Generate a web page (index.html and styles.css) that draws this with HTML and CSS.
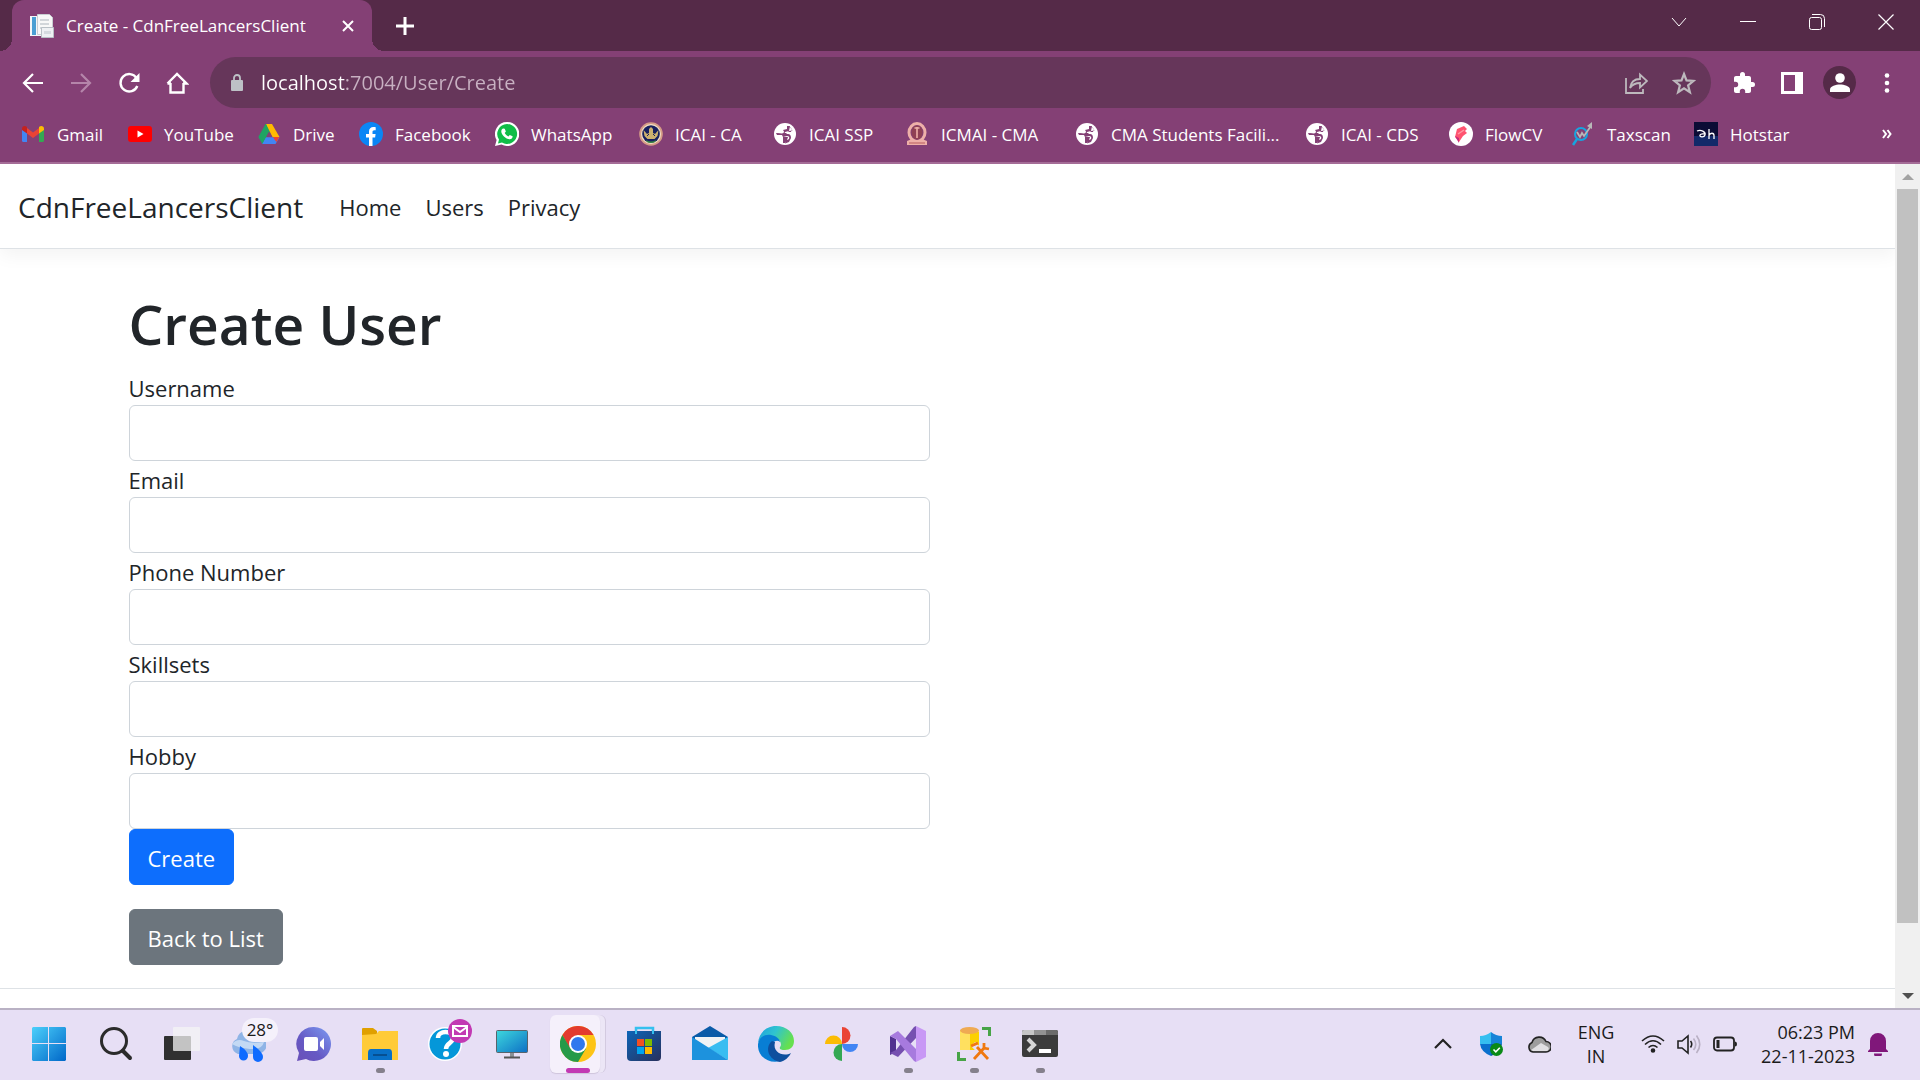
FILE: index.html
```html
<!DOCTYPE html>
<html lang="en">
<head>
<meta charset="utf-8">
<title>Create - CdnFreeLancersClient</title>
<link rel="stylesheet" href="styles.css">
</head>
<body>
<header class="browser">
  <div class="tabstrip">
    <div class="tab">
      <svg class="i24" viewBox="0 0 24 24"><path fill="#f4f6f8" d="M0 2h14v20H0z"/><path fill="#4b9fd3" d="M2 3h4v18H2z"/><path fill="#f8f8f8" stroke="#c9ced2" d="M7.500.500h12l3 3v17h-15z"/><path stroke="#d2d6da" stroke-width="2" d="M10 6h9M10 10h9M10 14h4"/><path fill="#eef0f3" stroke="#b9c0c6" d="M11.500 13.500h12v10h-12z"/><path fill="#d5dadf" d="M14 17h7v3h-7z"/></svg>
      <span class="tab-title">Create - CdnFreeLancersClient</span>
      <button class="bare" aria-label="Close tab"><svg width="12" height="12" viewBox="0 0 12 12"><path stroke="#fff" stroke-width="2" d="M1 1l10 10M11 1L1 11"/></svg></button>
    </div>
    <button class="bare newtab" aria-label="New tab"><svg width="18" height="18" viewBox="0 0 18 18"><path stroke="#fff" stroke-width="3" d="M9 0v18M0 9h18"/></svg></button>
    <div class="winbtns">
      <button class="bare" aria-label="Search tabs"><svg width="16" height="10" viewBox="0 0 16 10" fill="none"><path stroke="#fff" d="M1 1l7 8 7-8"/></svg></button>
      <button class="bare" aria-label="Minimize"><svg width="16" height="16" viewBox="0 0 16 16"><path stroke="#fff" d="M0 7.500h16"/></svg></button>
      <button class="bare" aria-label="Restore"><svg width="16" height="16" viewBox="0 0 16 16" fill="none" stroke="#fff"><rect x=".5" y="3.500" width="12" height="12" rx="2"/><path d="M3 .5h8.500a4 4 0 0 1 4 4V13"/></svg></button>
      <button class="bare" aria-label="Close"><svg width="16" height="16" viewBox="0 0 16 16"><path stroke="#fff" stroke-width="1.200" d="M.5.5l15 15M15.500.5l-15 15"/></svg></button>
    </div>
  </div>
  <div class="toolbar">
    <div class="navbtns">
      <button class="bare" aria-label="Back"><svg class="i24" viewBox="0 0 24 24" fill="none" stroke="#fff" stroke-width="2.200"><path d="M22 12H4M12 3l-9 9 9 9"/></svg></button>
      <button class="bare" aria-label="Forward"><svg class="i24" viewBox="0 0 24 24" fill="none" stroke="#b585aa" stroke-width="2.200"><path d="M2 12h18M12 3l9 9-9 9"/></svg></button>
      <button class="bare" aria-label="Reload"><svg class="i24" viewBox="0 0 24 24"><path fill="none" stroke="#fff" stroke-width="2.400" d="M19.500 7A8.700 8.700 0 1 0 20.300 15"/><path fill="#fff" d="M22.500 2v9h-9z"/></svg></button>
      <button class="bare" aria-label="Home"><svg class="i24" viewBox="0 0 24 24" fill="none" stroke="#fff" stroke-width="2.400"><path d="M5.500 12v9.500h13V12M2.500 12.500L12 3l9.500 9.500H18M2.500 12.500H6"/></svg></button>
    </div>
    <div class="omnibox">
      <svg width="12" height="17" viewBox="0 0 12 17"><path fill="#bdc1c6" d="M1 6h10a1 1 0 0 1 1 1v9a1 1 0 0 1-1 1H1a1 1 0 0 1-1-1V7a1 1 0 0 1 1-1z"/><path fill="none" stroke="#bdc1c6" stroke-width="1.800" d="M3 7V4a3 3 0 0 1 6 0v3"/></svg>
      <input class="url" aria-label="Address" value="localhost:7004/User/Create">
      <button class="bare" aria-label="Share"><svg class="i24" viewBox="0 0 24 24" fill="none" stroke="#bdb9bd" stroke-width="1.800"><path d="M2 7v15h17v-4M6 17c1-7 5-9 10-9V3.500l7 6.500-7 6.500V12c-5 0-8 2-10 5z"/></svg></button>
      <button class="bare" aria-label="Bookmark"><svg class="i24" viewBox="0 0 24 24" fill="none" stroke="#bdb9bd" stroke-width="2.200"><path d="M12 3l2.500 6.400 7 .5-5.400 4.500 1.800 6.800L12 17.400l-5.900 3.800 1.800-6.800L2.500 9.900l7-.5z"/></svg></button>
    </div>
    <div class="actions">
      <button class="bare" aria-label="Extensions"><svg class="i24" viewBox="0 0 24 24"><path fill="#fff" d="M20.500 11H19V7c0-1.100-.9-2-2-2h-4V3.500a2.500 2.500 0 0 0-5 0V5H4c-1.100 0-2 .9-2 2v3.800h1.500a2.700 2.700 0 0 1 0 5.400H2V20c0 1.100.9 2 2 2h3.800v-1.500a2.700 2.700 0 0 1 5.400 0V22H17c1.100 0 2-.9 2-2v-4h1.500a2.500 2.500 0 0 0 0-5z"/></svg></button>
      <button class="bare" aria-label="Side panel"><svg class="i24" viewBox="0 0 24 24"><path fill="#fff" fill-rule="evenodd" d="M1 1h22v22H1zM4 4v16h11V4z"/></svg></button>
      <button class="bare avatar" aria-label="Profile"><svg width="20" height="20" viewBox="0 0 20 20" fill="#fff"><circle cx="10" cy="5" r="4.800"/><path d="M0 19v-2.500C0 13 6 11.500 10 11.500s10 1.500 10 5V19z"/></svg></button>
      <button class="bare" aria-label="Menu"><svg class="i24" viewBox="0 0 24 24" fill="#fff"><circle cx="12" cy="4.500" r="2.300"/><circle cx="12" cy="12" r="2.300"/><circle cx="12" cy="19.500" r="2.300"/></svg></button>
    </div>
  </div>
  <nav class="bookmarks" aria-label="Bookmarks">
    <a href="#"><svg class="i24" viewBox="0 0 24 24"><path fill="#4285f4" d="M1 7l5 4v9H2.500A1.500 1.500 0 0 1 1 18.500z"/><path fill="#34a853" d="M23 7l-5 4v9h3.500a1.500 1.500 0 0 0 1.500-1.500z"/><path fill="#ea4335" d="M6 6l6 4.500L18 6v5.500L12 16l-6-4.500z"/><path fill="#c5221f" d="M1 6.500C1 4 4 3 6 5v6.500L1 8z"/><path fill="#fbbc04" d="M23 6.500C23 4 20 3 18 5v6.500L23 8z"/></svg>Gmail</a>
    <a href="#"><svg class="i24" viewBox="0 0 24 24"><rect y="4" width="24" height="16" rx="3" fill="red"/><path fill="#fff" d="M9.500 8.500l6 3.500-6 3.500z"/></svg>YouTube</a>
    <a href="#"><svg class="i24" viewBox="0 0 24 24"><path fill="#1fa463" d="M8.500 2H12l3 5.500L5.500 22 1.500 15z"/><path fill="#ffba00" d="M9 2h6l7.500 13h-7z"/><path fill="#4285f4" d="M5 15.500h17.500L18.500 22h-13z"/><path fill="#ea4335" d="M15.500 15h7l-3 5z"/><path fill="#1fa463" d="M9 2L1.500 15l4 7L12 10.500z"/><path fill="#4285f4" d="M9 15.500h7.500V22h-11z"/><path fill="#844075" d="M12 9.500l3.200 5.500H9z"/></svg>Drive</a>
    <a href="#"><svg class="i24" viewBox="0 0 24 24"><circle cx="12" cy="12" r="12" fill="#0a86f5"/><path fill="#fff" d="M10 24v-8.500H7V12h3V9.500C10 6.500 11.800 5 14.400 5c1.200 0 2.300.2 2.300.2v3h-1.400c-1.300 0-1.800.8-1.800 1.700V12h3.100l-.5 3.500h-2.600V24z"/></svg>Facebook</a>
    <a href="#"><svg class="i24" viewBox="0 0 24 24"><path fill="#fff" d="M12 0a12 12 0 1 1-5.500 22.500L0 24l1.600-6A12 12 0 0 1 12 0z"/><path fill="#10bd48" d="M12 2a10 10 0 1 1-5 18.600L3 21.500l1-3.900A10 10 0 0 1 12 2z"/><path fill="#fff" d="M8 6.500l1.700.2 1.200 2.800-1.200 1.600c.9 1.600 2 2.600 3.700 3.300l1.400-1.500 2.800 1.300c.2 1.700-1 3-2.800 3.100C10.500 17 6 12.500 6.300 9.200 6.400 8 7 7 8 6.500z"/></svg>WhatsApp</a>
    <a href="#"><svg class="i24" viewBox="0 0 24 24"><circle cx="12" cy="12" r="11.800" fill="#d59c86"/><circle cx="12" cy="12" r="10" fill="#f3e2c8"/><circle cx="12" cy="12" r="8.800" fill="#17205f"/><path fill="#cdb16e" d="M4.500 8l3.500 4 2-1V7l2-2 2 2v4l2 1 3.500-4-1 6-3 3h-7l-3-3z"/><path fill="none" stroke="#17205f" d="M8 14l2-2M16 14l-2-2"/><path fill="#388a41" d="M7 18q5 3 10 0l-1 2q-4 2-8 0z"/></svg>ICAI - CA</a>
    <a href="#"><svg class="i24" viewBox="0 0 24 24"><use href="#globe"/></svg>ICAI SSP</a>
    <a href="#"><svg class="i24" viewBox="0 0 24 24"><ellipse cx="12" cy="10.500" rx="8" ry="9" fill="none" stroke="#eeb0a8" stroke-width="3"/><ellipse cx="12" cy="10.500" rx="5.500" ry="7" fill="#8f4054"/><path stroke="#eeb0a8" stroke-width="1.600" d="M12 5v11M9.500 6h5"/><path fill="#eeb0a8" d="M2 19l5-2 5 3 5-3 5 2v4H2z"/><path stroke="#b65c5e" d="M4 21h16"/></svg>ICMAI - CMA</a>
    <a href="#"><svg class="i24" viewBox="0 0 24 24"><use href="#globe"/></svg>CMA Students Facili...</a>
    <a href="#"><svg class="i24" viewBox="0 0 24 24"><use href="#globe"/></svg>ICAI - CDS</a>
    <a href="#"><svg class="i24" viewBox="0 0 24 24"><circle cx="12" cy="12" r="12" fill="#fff"/><path fill="#ff5470" d="M8 7l7-3 3 3-2 2 2 2-4 3-4 6-4-5z"/><path fill="#c92a7c" d="M6 14l4 2v5z"/><path stroke="#ff9aa5" stroke-width="1.500" d="M9 12l6-4"/></svg>FlowCV</a>
    <a href="#"><svg class="i24" viewBox="0 0 24 24"><circle cx="10" cy="12" r="6" fill="none" stroke="#16a5e0" stroke-width="2"/><path stroke="#16a5e0" stroke-width="2.500" d="M6 17l-4 6"/><path fill="none" stroke="#b8b8b8" stroke-width="1.800" d="M6 10l3 5 2-4 2 3L20 4"/><path fill="#b8b8b8" d="M21 0v7l-5-3z"/></svg>Taxscan</a>
    <a href="#"><svg class="i24" viewBox="0 0 24 24"><path fill="#0b0c35" d="M0 0h24v24H0z"/><path fill="#143177" d="M0 14h24v10H0z" opacity=".8"/><path fill="none" stroke="#fff" stroke-width="1.300" d="M3 9c4-2 9 1 8 4-1 3-6 2-5 0s3-1 5-1M15 7v10M15 13.500c1-3 5-3 5 0V17"/></svg>Hotstar</a>
    <button class="bare more" aria-label="More bookmarks"><svg width="10" height="10" viewBox="0 0 10 10" fill="none" stroke="#fff" stroke-width="2"><path d="M1 1l3 4-3 4M5.500 1l3 4-3 4"/></svg></button>
  </nav>
</header>

<div class="viewport">
  <div class="page">
    <nav class="navbar">
      <a class="brand" href="#">CdnFreeLancersClient</a>
      <a href="#">Home</a>
      <a href="#">Users</a>
      <a href="#">Privacy</a>
    </nav>
    <main class="container">
      <form class="form">
        <h1>Create User</h1>
        <label for="username">Username</label>
        <input id="username" type="text">
        <label for="email">Email</label>
        <input id="email" type="text">
        <label for="phone">Phone Number</label>
        <input id="phone" type="text">
        <label for="skillsets">Skillsets</label>
        <input id="skillsets" type="text">
        <label for="hobby">Hobby</label>
        <input id="hobby" type="text">
        <button class="btn primary" type="button">Create</button>
        <a class="btn secondary" href="#">Back to List</a>
      </form>
    </main>
    <footer class="footer"></footer>
  </div>
  <div class="scrollbar">
    <svg width="12" height="6" viewBox="0 0 12 6"><path fill="#a3a3a3" d="M6 0l6 6H0z"/></svg>
    <div class="track"><div class="thumb"></div></div>
    <svg width="12" height="6" viewBox="0 0 12 6"><path fill="#505050" d="M6 6l6-6H0z"/></svg>
  </div>
</div>

<footer class="taskbar">
  <div class="apps">
    <button class="bare app" aria-label="Start"><svg class="i36" viewBox="0 0 36 36"><defs><linearGradient id="win" x1="0" y1="0" x2="1" y2="1"><stop stop-color="#4cd0fb"/><stop offset="1" stop-color="#0067c8"/></linearGradient></defs><path fill="url(#win)" d="M2 1h15v16H1V2zM18 1h16l1 1v15H18zM1 18h16v17H2l-1-1zM18 18h17v16l-1 1H18z"/></svg></button>
    <button class="bare app" aria-label="Search"><svg class="i36" viewBox="0 0 36 36" fill="none" stroke="#2b2b2b"><circle cx="16" cy="15" r="12.500" stroke-width="3"/><path stroke-width="4" stroke-linecap="round" d="M25 25l7 7"/></svg></button>
    <button class="bare app" aria-label="Task view"><svg class="i36" viewBox="0 0 36 36"><rect y="10" width="27" height="24" rx="1" fill="#303030"/><rect x="9" y="1" width="27" height="24" rx="1" fill="#f4f4f4" opacity=".75"/></svg></button>
    <button class="bare app" aria-label="Weather"><svg class="i36" viewBox="0 0 36 36"><circle cx="28" cy="8" r="7" fill="#fbdcc4"/><path fill="#8fb4e6" d="M8 28a8 8 0 0 1-1-15A10 10 0 0 1 25 9a9 9 0 0 1 4 19z"/><path fill="#c3d9f4" d="M2 18q5-6 12-3t20 1q-2 8-14 7T2 18z"/><path fill="#0f6bff" d="M10 20q8 5 8 10a4.500 4.500 0 0 1-9 0zM23 19q10 7 10 12a5 5 0 0 1-10 0z"/></svg><span class="temp">28°</span></button>
    <button class="bare app" aria-label="Chat"><svg class="i36" viewBox="0 0 36 36"><defs><linearGradient id="chat" x1="1" y1="0" x2="0" y2="1"><stop stop-color="#7b9bf2"/><stop offset=".6" stop-color="#6659c4"/><stop offset="1" stop-color="#6a50b8"/></linearGradient></defs><path fill="url(#chat)" d="M18 1a17 17 0 1 1-8 32l-9 2 2-8A17 17 0 0 1 18 1z"/><rect x="8" y="11" width="14" height="14" rx="2" fill="#fff"/><path fill="#fff" d="M24 16l4-4v12l-4-4z"/></svg></button>
    <button class="bare app run" aria-label="File Explorer"><svg class="i36" viewBox="0 0 36 36"><path fill="#e0a000" d="M0 3q0-1 1-1h10l4 3v5H0z"/><path fill="#ffcb38" d="M0 9l14-1 3-3h19v29H0z"/><path fill="#0870c7" d="M6 34v-7q0-4 3-4h18q3 0 3 4v7z"/><path stroke="#064f91" stroke-width="2" d="M11 29h14"/></svg></button>
    <button class="bare app" aria-label="Get Help"><svg class="i36" viewBox="0 0 36 36"><circle cx="17" cy="18" r="17" fill="#fff"/><circle cx="17" cy="18" r="15.500" fill="#0497d9"/><path fill="none" stroke="#fff" stroke-width="4.500" d="M10 12c0-8 15-8 15 0 0 5-7 5-7 11"/><circle cx="18" cy="28" r="3" fill="#fff"/></svg><svg class="badge i24" viewBox="0 0 24 24"><circle cx="12" cy="12" r="12" fill="#c239b3"/><path fill="none" stroke="#fff" stroke-width="2" d="M5 7h14v10H5zM5 8l7 5 7-5"/></svg></button>
    <button class="bare app" aria-label="Remote Desktop"><svg class="i36" viewBox="0 0 36 36"><defs><linearGradient id="mon" x1="0" y1="0" x2="1" y2="1"><stop stop-color="#3dd8dd"/><stop offset="1" stop-color="#0d6fc5"/></linearGradient></defs><rect x="2.500" y="4.500" width="31" height="22" rx="1" fill="url(#mon)" stroke="#59636b"/><path fill="#8b9196" d="M16 27h4v4h-4z"/><path stroke="#555" stroke-width="2" d="M10 31.500h16"/></svg></button>
    <button class="bare app active" aria-label="Google Chrome"><svg class="i36" viewBox="0 0 36 36"><circle cx="18" cy="18" r="18" fill="#fdc417"/><path fill="#e33b2e" d="M2.400 9a18 18 0 0 1 31.200 0H18L10 23z"/><path fill="#269a49" d="M2.400 9l8 13.500L26 22.500 18 36A18 18 0 0 1 2.400 9z"/><circle cx="18" cy="18" r="9" fill="#fff"/><circle cx="18" cy="18" r="7" fill="#2f78ee"/></svg></button>
    <button class="bare app" aria-label="Microsoft Store"><svg class="i36" viewBox="0 0 36 36"><defs><linearGradient id="store" x1="0" y1="0" x2="1" y2="1"><stop stop-color="#0c65b8"/><stop offset="1" stop-color="#28305c"/></linearGradient></defs><path fill="none" stroke="#35c0ef" stroke-width="2.500" d="M10 8V2h17v6"/><path fill="url(#store)" d="M1 5h34v26q0 4-4 4H5q-4 0-4-4z"/><path fill="#35c0ef" d="M9 5h2v3H9zM26 5h2v3h-2z"/><path fill="#f25022" d="M11 13h7v7h-7z"/><path fill="#7fba00" d="M19 13h7v7h-7z"/><path fill="#00a4ef" d="M11 21h7v7h-7z"/><path fill="#ffb900" d="M19 21h7v7h-7z"/></svg></button>
    <button class="bare app" aria-label="Mail"><svg class="i36" viewBox="0 0 36 36"><path fill="#0a5ba8" d="M0 11L18 0l18 11v5H0z"/><path fill="#f1f3f5" d="M3 11h30v5L18 24 3 16z"/><path fill="#38bdf1" d="M36 11L16 22l20 12z"/><path fill="#1d92dd" d="M0 11l36 23H0z"/></svg></button>
    <button class="bare app" aria-label="Microsoft Edge"><svg class="i36" viewBox="0 0 36 36"><defs><linearGradient id="eg" x1="0" y1="0" x2="1" y2=".4"><stop stop-color="#1f9fe0"/><stop offset=".5" stop-color="#30c4cf"/><stop offset="1" stop-color="#66e04f"/></linearGradient></defs><path fill="url(#eg)" d="M0 17C1 6 9 0 18 0c11 0 18 7 18 15 0 6-4 9-9 9-4 0-6-1-5-3 2-2 1-7-4-9C9 8 3 11 0 17z"/><path fill="#087ed4" d="M0 18C1 11 7 8 13 9c5 1 9 4 9 7-4-4-11 2-8 9 2 6 8 9 13 8-12 7-28 0-27-15z"/><path fill="#0e4f9e" d="M14 15c-8 7-3 19 8 21 5-1 9-5 11-9-7 4-19 0-16-11z"/></svg></button>
    <button class="bare app" aria-label="Google Photos"><svg class="i36" viewBox="0 0 36 36"><path fill="#ea4335" d="M18 1a8.500 8.500 0 0 1 0 17z"/><path fill="#4285f4" d="M18 18h16a8 8 0 0 1-16 0z"/><path fill="#34a853" d="M18 18v17a8.500 8.500 0 0 1 0-17z"/><path fill="#fbbc04" d="M1 18a8.500 8.500 0 0 1 17 0z"/></svg></button>
    <button class="bare app run" aria-label="Visual Studio"><svg class="i36" viewBox="0 0 36 36"><path fill="#52318f" d="M0 10l6 3v13l-6 3z"/><path fill="#7650b0" d="M0 27L6 24 24 1l2-1v12L8 31z"/><path fill="#a77ade" d="M0 10l8-5 18 18v13l-2-1L6 13z"/><path fill="#c898f5" d="M26 0l10 5v26l-10 5z"/></svg></button>
    <button class="bare app run" aria-label="SQL Server Management Studio"><svg class="i36" viewBox="0 0 36 36"><path fill="#ffe05f" d="M4 4h19v20H4z"/><path fill="#fcd000" d="M14 6h9v18h-9z"/><ellipse cx="13.500" cy="4.500" rx="9.500" ry="3.500" fill="#efaa53"/><path fill="none" stroke="#47a447" stroke-width="3" d="M26 2.500h7.500V10M2.500 26v7.500H10"/><path fill="none" stroke="#e7dff5" stroke-width="6" d="M18 33l13-14M17 18l15 15"/><path fill="none" stroke="#f07810" stroke-width="2.800" d="M18 33l11-12M21 21l11 12M15 20l7-3M28 17v5l5 1"/></svg></button>
    <button class="bare app run" aria-label="Terminal"><svg class="i36" viewBox="0 0 36 36"><rect y="4" width="36" height="27" rx="2" fill="#3b3b3b"/><path fill="#c6c6c6" d="M0 9V6q0-2 2-2h10v5z"/><path fill="#929292" d="M12 4h12v5H12z"/><path fill="#6b6b6b" d="M24 4h10q2 0 2 2v3H24z"/><path fill="none" stroke="#d5d5d5" stroke-width="4" d="M6 13l6 6-6 6"/><path stroke="#fff" stroke-width="4" d="M17 25h12"/></svg></button>
  </div>
  <div class="tray">
    <button class="bare" aria-label="Hidden icons"><svg class="i24" viewBox="0 0 24 24" fill="none" stroke="#222" stroke-width="2.200"><path d="M4 16l8-8 8 8"/></svg></button>
    <button class="bare" aria-label="Security"><svg class="i24" viewBox="0 0 24 24"><path fill="#36bff0" d="M1 4q6 0 11-4v12H1z"/><path fill="#1684d8" d="M12 0q5 4 11 4v8H12z"/><path fill="#0b70cd" d="M1 12h11v12Q2 20 1 12z"/><path fill="#0b5bb0" d="M12 12h11q-1 8-11 12z"/><circle cx="17.500" cy="17.500" r="6.500" fill="#0a8a16"/><path fill="none" stroke="#fff" stroke-width="1.600" d="M14.500 17.500l2.300 2.300 4-4"/></svg></button>
    <button class="bare" aria-label="OneDrive"><svg class="i24" viewBox="0 0 24 24"><path fill="#9d9d9d" stroke="#222" stroke-width="1.600" d="M6 20a5 5 0 0 1-1-9.500 7.500 7.500 0 0 1 14-1 5 5 0 0 1 0 10.500z"/><path fill="#e0dfe2" d="M4 18l10-7 7 4q2 2-1 4H6z"/></svg></button>
    <span class="lang">ENG<br>IN</span>
    <button class="bare status" aria-label="Network, volume, battery">
      <svg class="i24" viewBox="0 0 24 24" fill="none" stroke="#222" stroke-width="1.600"><path d="M1 9q11-10 22 0M4 12.500q8-7.500 16 0M7.500 15.500q4.500-4 9 0"/><circle cx="12" cy="18.500" r="1.500" fill="#222"/></svg>
      <svg class="i24" viewBox="0 0 24 24" fill="none" stroke="#222" stroke-width="1.600"><path d="M1 9h4l6-5v17l-6-5H1zM13.500 9q2.500 3 0 6.500"/><path stroke="#b9b0c4" d="M16.500 6.500q4.500 6 0 11.500M19.500 3.500q6.500 9 0 17.500"/></svg>
      <svg class="i24" viewBox="0 0 24 24"><rect x="1" y="5.500" width="20" height="13" rx="3" fill="none" stroke="#222" stroke-width="1.800"/><path fill="#222" d="M3.500 8h3v8h-3zM22 9.500q2 0 2 2.500t-2 2.500z"/></svg>
    </button>
    <time class="clock">06:23 PM<br>22-11-2023</time>
    <button class="bare" aria-label="Notifications"><svg class="i24" viewBox="0 0 24 24" fill="#80177a"><path d="M4 17V9a8 8 0 0 1 16 0v8l2 2v1H2v-1zM8 21.500h8a4 4 0 0 1-8 0z"/></svg></button>
  </div>
</footer>

<svg class="defs" width="0" height="0" aria-hidden="true"><symbol id="globe" viewBox="0 0 24 24"><circle cx="12" cy="12" r="11" fill="#fff"/><path fill="#844075" d="M14 3.500q4 1.500 5.500 5L16 9l-2 2h-3q-1 2-3 1l-5-1 1 2h5l1 2 4-1q3 0 2 3-1 1-3 1l-1 3.500 4-1.500 2-4q0-4-3-4h-2l2-2h3l1-3z"/><path fill="#844075" d="M3 11l6 .5q2 0 2-2l-1-1.500 4-1V4h3l-1 5-4 1-1 3H6zM10 15h5l-1 3-2 3h-2z"/></symbol></svg>
</body>
</html>
```
FILE: styles.css
```css
* { box-sizing: border-box; }
body {
  margin: 0;
  height: 100vh;
  display: flex;
  flex-direction: column;
  overflow: hidden;
  font-family: "Open Sans", "Noto Sans", sans-serif;
  color: #212529;
  background: #fff;
}
a { color: inherit; text-decoration: none; }
svg { display: block; flex: none; }
.defs { position: absolute; }
.i24 { width: 24px; height: 24px; }
.i36 { width: 36px; height: 36px; }
.bare {
  display: flex;
  align-items: center;
  justify-content: center;
  padding: 0;
  border: 0;
  background: none;
  font: inherit;
  color: inherit;
}

/* Browser frame */
.browser { background: #844075; color: #fff; border-bottom: 2px solid #a46c97; }
.tabstrip { display: flex; height: 51px; padding-left: 12px; background: #552a48; }
.tab {
  position: relative;
  display: flex;
  align-items: center;
  width: 360px;
  padding: 0 18px;
  border-radius: 12px 12px 0 0;
  background: #844075;
}
.tab::before, .tab::after {
  content: "";
  position: absolute;
  bottom: 0;
  width: 12px;
  height: 12px;
}
.tab::before { left: -12px; background: radial-gradient(circle at 0 0, #552a48 12px, #844075 12px); }
.tab::after { right: -12px; background: radial-gradient(circle at 100% 0, #552a48 12px, #844075 12px); }
.tab-title { flex: 1; padding-left: 12px; font-size: 17px; white-space: nowrap; }
.newtab { width: 66px; }
.winbtns { display: flex; margin-left: auto; }
.winbtns .bare { width: 69px; height: 44px; }
.toolbar { display: flex; align-items: center; padding: 6px 9px; }
.navbtns { display: flex; width: 201px; }
.navbtns .bare { width: 48px; height: 48px; }
.omnibox {
  flex: 1;
  display: flex;
  align-items: center;
  gap: 18px;
  height: 51px;
  padding: 0 12px 0 21px;
  border-radius: 26px;
  background: #66365a;
}
.omnibox .bare { width: 30px; }
.url {
  flex: 1;
  min-width: 0;
  padding: 0;
  border: 0;
  outline: 0;
  font: 20px "Open Sans", "Noto Sans", sans-serif;
  color: transparent;
  background: linear-gradient(90deg, #fff 84px, #c8b1c2 84px);
  -webkit-background-clip: text;
  background-clip: text;
}
.actions { display: flex; margin-left: 9px; }
.actions .bare { width: 48px; height: 33px; }
.actions .avatar { width: 33px; margin: 0 7px; border-radius: 50%; background: #552a48; }
.bookmarks {
  display: grid;
  grid-template-columns: 107px 129px 102px 136px 144px 134px 132px 170px 230px 144px 122px 123px 1fr auto;
  align-items: center;
  height: 48px;
  padding: 0 28px 8px 21px;
  font-size: 17px;
  white-space: nowrap;
}
.bookmarks a { display: flex; align-items: center; gap: 12px; }

/* Web page */
.viewport { flex: 1; display: flex; min-height: 0; }
.page { flex: 1; min-width: 0; overflow: hidden; font-size: 22px; line-height: 36px; }
.navbar {
  display: flex;
  align-items: center;
  gap: 24px;
  height: 85px;
  padding: 2px 18px 0;
  border-bottom: 1px solid #dee2e6;
  box-shadow: 0 6px 18px rgba(0, 0, 0, .05);
}
.brand { margin-right: 12px; font-size: 28px; }
.container { max-width: 1710px; margin: 0 auto; padding: 39px 18px 23px; }
.form { display: flex; flex-direction: column; align-items: flex-start; width: 50%; padding: 0 18px; }
h1 { margin: 0 0 9px; font-size: 55px; line-height: 72px; font-weight: 600; }
.form label { height: 36px; padding-top: 1px; }
.form input {
  width: 100%;
  height: 56px;
  padding: 9px 18px;
  border: 1px solid #ced4da;
  border-radius: 6px;
  font: inherit;
}
.btn {
  height: 56px;
  padding: 10px 18px 8px;
  border: 1px solid;
  border-radius: 6px;
  font: inherit;
  color: #fff;
}
.primary { margin-bottom: 24px; background: #0d6efd; border-color: #0d6efd; }
.secondary { background: #6c757d; border-color: #6c757d; }
.footer { height: 90px; border-top: 1px solid #dee2e6; }
.scrollbar {
  display: flex;
  flex-direction: column;
  align-items: center;
  width: 25px;
  padding: 10px 0 9px;
  background: #f0f0f0;
}
.track { flex: 1; align-self: stretch; padding: 9px 2px; }
.thumb { height: calc(100% - 61px); background: #c1c1c1; }

/* Taskbar */
.taskbar {
  display: flex;
  justify-content: space-between;
  height: 72px;
  padding: 0 30px 0 16px;
  border-top: 2px solid #b9b1c4;
  background: #e7dff5;
  color: #1b1b1b;
  font-size: 18px;
  line-height: 24px;
}
.apps, .tray { display: flex; align-items: center; padding-bottom: 2px; }
.app { position: relative; width: 66px; height: 68px; }
.app:first-child { margin-right: 1px; }
.run::after, .active::after {
  content: "";
  position: absolute;
  bottom: 5px;
  width: 9px;
  height: 5px;
  border-radius: 3px;
  background: #85808c;
}
.active::after { width: 24px; background: #c239b3; }
.active::before {
  content: "";
  position: absolute;
  top: 5px;
  left: 5px;
  width: 50px;
  height: 58px;
  border-radius: 6px;
  background: #f5f0fb;
  box-shadow: 0 1px 1px #cfc5dc, 5px 0 0 #ece6f6, 6px 0 0 #d3cae0;
}
.active svg { position: relative; }
.temp {
  position: absolute;
  top: 8px;
  left: 27px;
  width: 36px;
  border-radius: 12px;
  background: #f5f1fb;
  font-size: 17px;
}
.badge { position: absolute; top: 9px; right: 7px; }
.tray > .bare { width: 48px; height: 48px; }
.lang { width: 66px; margin-right: 6px; text-align: center; }
.tray > .status { width: 108px; gap: 12px; }
.clock { width: 112px; text-align: right; }
.tray > .bare:last-child { width: 24px; margin-left: 11px; }
```
